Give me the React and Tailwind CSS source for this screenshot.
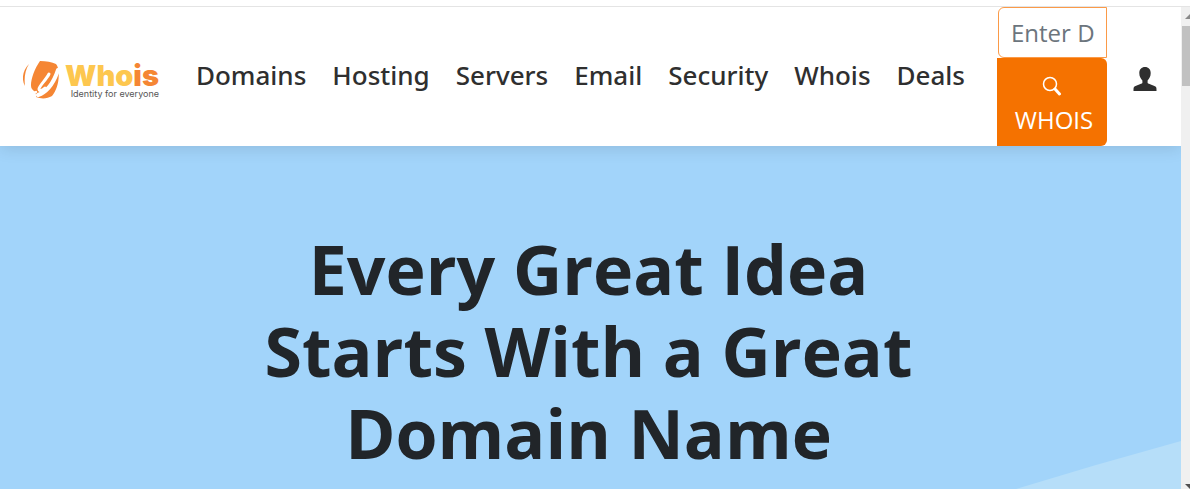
import React, { useState } from "react";

const NAV_ITEMS = ["Domains", "Hosting", "Servers", "Email", "Security", "Whois", "Deals"];

const Logo = () => (
  <a href="#home" className="flex shrink-0 items-center gap-1.5 pt-1.5">
    <svg viewBox="0 0 36 38" className="h-[38px] w-9" aria-hidden="true">
      <path fill="#f58634" d="M6 3C0 9 -2 18 2 25C1 17 2 9 6 3Z" />
      <path
        fill="#f58634"
        d="M17 0C23 0 29 1 33 3C35 5 35 8 35.5 10C36.5 20 34 29 29 35C24 38 18 38 13 36C14 33 11 30 9 28C6 24 10 10 17 0Z"
      />
      <g fill="none" stroke="#fff" strokeLinecap="round" strokeLinejoin="round">
        <path strokeWidth="3" d="M26 13C23 19 16 25 16 28C16 31 20 29 22 27" />
        <path strokeWidth="4" d="M35 9C31 21 24 31 15 34" />
        <path strokeWidth="2.5" d="M7 28C8 31 11 32 13 31" />
      </g>
    </svg>
    <span className="flex flex-col items-end pt-0.5">
      <span className="font-['Inter',sans-serif] text-[29px] leading-[26px] font-black text-[#fdc74f]">
        Who<span className="text-[#f58634]">is</span>
      </span>
      <span className="font-['Inter',sans-serif] text-[9px] leading-[9px] text-[#555555]">Identity for everyone</span>
    </span>
  </a>
);

const SearchIcon = () => (
  <svg viewBox="0 0 20 20" className="h-5 w-5" fill="none" stroke="currentColor" aria-hidden="true">
    <circle cx="8" cy="8" r="6.5" strokeWidth="1.5" />
    <path d="M13 13L17.5 18" strokeWidth="3" strokeLinecap="round" />
  </svg>
);

const UserIcon = () => (
  <svg viewBox="0 0 24 24" className="h-6 w-6" fill="#2f2f2f" aria-hidden="true">
    <path d="M12 0C8.5 0 6.3 2.4 6.3 6C6.3 9.5 7.7 11.6 9.4 13.5V16C8.5 17.2 3 18.2 1.2 19.8C0.4 20.6 0.5 22.5 0.5 24H23.5C23.5 22.5 23.6 20.6 22.8 19.8C21 18.2 15.5 17.2 14.6 16V13.5C16.3 11.6 17.7 9.5 17.7 6C17.7 2.4 15.5 0 12 0Z" />
  </svg>
);

const DomainSearch = () => {
  const [domain, setDomain] = useState("");

  return (
    <form className="mr-[26px] ml-8 w-[110px] shrink-0" onSubmit={(e) => e.preventDefault()}>
      <div className="pl-px">
        <input
          type="text"
          aria-label="Enter Domain"
          placeholder="Enter Domain"
          value={domain}
          onChange={(e) => setDomain(e.target.value)}
          className="block h-[51px] w-full rounded-l-md border border-[#fb9a48] bg-white px-3 text-2xl text-[#212529] placeholder:text-[#6c757d] focus:outline-none"
        />
      </div>
      <button
        type="submit"
        className="flex w-full flex-col items-center rounded-r-md bg-[#f57200] pt-[11px] pb-[9px] pl-1 text-2xl leading-[34px] text-white"
      >
        <span className="flex h-[34px] items-center pr-1"><SearchIcon /></span>
        WHOIS
      </button>
    </form>
  );
};

const Header = () => (
  <header className="relative z-10 flex items-center bg-white pr-6 pl-[23px] shadow-[0_2px_16px_rgba(0,0,0,0.12)]">
    <Logo />
    <nav className="ml-auto flex gap-[26px] pb-1">
      {NAV_ITEMS.map((item) => (
        <a
          key={item}
          href={`#${item.toLowerCase()}`}
          className="font-['Noto_Sans',sans-serif] text-[26px] leading-9 font-medium text-[#2f2f2f]"
        >
          {item}
        </a>
      ))}
    </nav>
    <DomainSearch />
    <a href="#account" aria-label="Account" className="pt-1">
      <UserIcon />
    </a>
  </header>
);

const Hero = () => (
  <main className="relative flex-1 bg-[#a2d4fa] pt-[82px] pr-1">
    <svg
      viewBox="0 0 165 48"
      preserveAspectRatio="none"
      className="absolute right-0 bottom-0 h-12 w-[165px]"
      fill="#b6def9"
      aria-hidden="true"
    >
      <path d="M0 48L80 24L165 0V48Z" />
    </svg>
    <h1 className="relative mx-auto max-w-[700px] text-center text-[68px] leading-[82px] font-bold text-[#212529]">
      Every Great Idea Starts With a Great Domain Name
    </h1>
  </main>
);

const ScrollRail = () => (
  <div className="flex w-[9px] shrink-0 flex-col justify-between overflow-hidden bg-[#f0f0f0]" aria-hidden="true">
    <div>
      <svg viewBox="0 0 9 19" className="h-[19px] w-[9px]" fill="#8a8a8a">
        <path d="M4 12L9 7V12Z" />
      </svg>
      <div className="ml-px h-[60px] bg-[#c1c1c1]" />
    </div>
    <svg viewBox="0 0 9 6" className="h-1.5 w-[9px]" fill="#505050">
      <path d="M4 1H9V6Z" />
    </svg>
  </div>
);

export default function App() {
  return (
    <div className="flex h-screen flex-col overflow-hidden bg-white pr-2.5 font-['Open_Sans',sans-serif]">
      <div className="h-[7px] shrink-0 border-b border-[#e4e4e4]" />
      <div className="flex min-h-0 flex-1">
        <div className="flex min-w-0 flex-1 flex-col overflow-hidden">
          <Header />
          <Hero />
        </div>
        <ScrollRail />
      </div>
    </div>
  );
}
